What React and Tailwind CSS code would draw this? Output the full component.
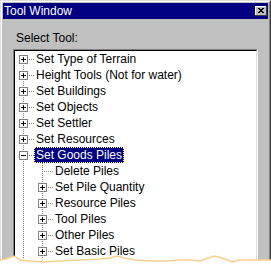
import React from 'react';

// tree rows as they appear (level 1 = root items)
const rows = [
  { level: 1, label: 'Set Type of Terrain', kids: true, first: true },
  { level: 1, label: 'Height Tools (Not for water)', kids: true },
  { level: 1, label: 'Set Buildings', kids: true },
  { level: 1, label: 'Set Objects', kids: true },
  { level: 1, label: 'Set Settler', kids: true },
  { level: 1, label: 'Set Resources', kids: true },
  { level: 1, label: 'Set Goods Piles', kids: true, open: true, selected: true },
  { level: 2, label: 'Delete Piles' },
  { level: 2, label: 'Set Pile Quantity', kids: true },
  { level: 2, label: 'Resource Piles', kids: true },
  { level: 2, label: 'Tool Piles', kids: true },
  { level: 2, label: 'Other Piles', kids: true },
  { level: 2, label: 'Set Basic Piles', kids: true },
];

const INDENT = 19;

// --- connector lines + expander box for one row ---
const Gutter = ({ level, first, kids, open }) => {
  const w = INDENT * level;
  const cx = 8 + INDENT * (level - 1);
  const dots = { stroke: '#808080', strokeDasharray: '1 1' };
  return (
    <svg width={w} height="16" shapeRendering="crispEdges" className="shrink-0">
      {Array.from({ length: level - 1 }).map((_, i) => (
        <line key={i} x1={8 + INDENT * i + 0.5} y1="0" x2={8 + INDENT * i + 0.5} y2="16" {...dots} />
      ))}
      <line x1={cx + 0.5} y1={first ? 8 : 0} x2={cx + 0.5} y2="16" {...dots} />
      <line x1={kids ? cx + 6 : cx + 2} y1="8.5" x2={w} y2="8.5" {...dots} />
      {kids && (
        <>
          <rect x={cx - 4 + 0.5} y="4.5" width="8" height="8" fill="#fff" stroke="#808080" />
          <line x1={cx - 2} y1="8.5" x2={cx + 3} y2="8.5" stroke="#000" />
          {!open && <line x1={cx + 0.5} y1="6" x2={cx + 0.5} y2="11" stroke="#000" />}
        </>
      )}
    </svg>
  );
};

const TreeRow = ({ row }) => (
  <div className="flex h-[16px] items-center">
    <Gutter {...row} />
    <span
      className={
        row.selected
          ? 'h-[16px] whitespace-nowrap bg-[#000080] px-[2px] text-white outline-1 outline-dotted -outline-offset-1 outline-[#ffff80]'
          : 'h-[16px] whitespace-nowrap px-[2px]'
      }
    >
      {row.label}
    </span>
  </div>
);

const CloseButton = () => (
  <div className="h-[10px] w-[12px] bg-[#c0c0c0] shadow-[inset_-1px_-1px_#404040,inset_1px_1px_#ffffff]">
    <svg width="12" height="10" shapeRendering="crispEdges">
      <rect x="3" y="2" width="2" height="1" fill="#000" />
      <rect x="7" y="2" width="2" height="1" fill="#000" />
      <rect x="4" y="3" width="4" height="1" fill="#000" />
      <rect x="5" y="4" width="2" height="1" fill="#000" />
      <rect x="4" y="5" width="4" height="1" fill="#000" />
      <rect x="3" y="6" width="2" height="1" fill="#000" />
      <rect x="7" y="6" width="2" height="1" fill="#000" />
    </svg>
  </div>
);

// torn paper edge at the bottom of the screenshot
const tornPts = [
  [0, 10], [6, 9], [14, 6], [20, 10], [30, 11], [45, 12], [60, 11], [80, 10], [100, 9], [110, 8],
  [117, 6], [125, 8], [135, 10], [150, 11], [165, 11], [180, 10], [190, 10], [200, 11], [208, 8],
  [215, 6], [225, 9], [232, 12], [240, 10], [255, 10], [271, 10],
];

const TornEdge = () => {
  const line = tornPts.map((p) => p.join(',')).join(' ');
  return (
    <svg width="271" height="22" className="absolute bottom-0 left-0">
      <polygon points={`${line} 271,22 0,22`} fill="#fff" />
      <polyline points={line} fill="none" stroke="#f7cf93" strokeWidth="1.5" />
    </svg>
  );
};

export default function App() {
  return (
    <div className="relative h-[272px] w-[271px] overflow-hidden bg-white font-['Liberation_Sans',Arial,sans-serif] text-[12px] leading-[16px] text-black">
      <div className="flex h-full flex-col border-l border-t border-r border-[#dfdfdf] border-r-[#404040] bg-[#c0c0c0]">
        <div className="flex min-h-0 flex-1 flex-col border-l border-t border-r border-white border-r-[#808080] px-[1px] pt-[1px]">
          {/* title bar */}
          <div className="flex h-[16px] items-center justify-between bg-[#000080] pl-[1px] pr-[1px]">
            <span className="text-white">Tool Window</span>
            <CloseButton />
          </div>

          <div className="flex min-h-0 flex-1 flex-col px-[10px]">
            <div className="mb-[3px] mt-[11px] pl-[3px]">Select Tool:</div>
            <div className="min-h-0 flex-1 border-l border-t border-r border-[#808080] border-r-white">
              <div className="h-full overflow-hidden border-l border-t border-r border-black border-r-[#dfdfdf] bg-white">
                {rows.map((r) => (
                  <TreeRow key={r.label} row={r} />
                ))}
              </div>
            </div>
          </div>
        </div>
      </div>
      <TornEdge />
    </div>
  );
}
